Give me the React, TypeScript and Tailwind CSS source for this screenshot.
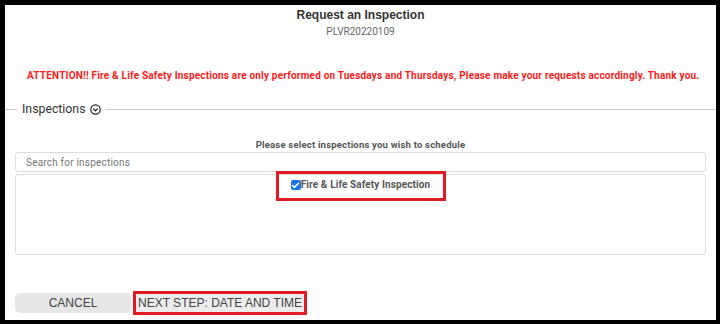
import { CheckIcon } from 'lucide-react'

function ChevronCircle() {
  return (
    <svg width="11" height="11" viewBox="0 0 12 12" className="mt-[1px]">
      <circle cx="6" cy="6" r="5.1" fill="none" stroke="#222" strokeWidth="1.3" />
      <path d="M3.6 5 L6 7.4 L8.4 5" fill="none" stroke="#222" strokeWidth="1.4" />
    </svg>
  )
}

export default function App() {
  return (
    <div
      className="h-[324px] w-[720px] bg-black pt-[5px] pl-[5px] pr-[4px] pb-[4px]"
      style={{ fontFamily: 'Roboto, "Liberation Sans", Arial, sans-serif' }}
    >
      <div className="flex h-full w-full flex-col bg-white">
        <div className="pt-[2px] text-center font-['Liberation_Sans',Arial,sans-serif] text-[12px] font-bold leading-[16px] text-[#333]">
          Request an Inspection
        </div>
        <div className="mt-[2px] text-center text-[10px] leading-[14px] text-[#666]">PLVR20220109</div>

        <div className="mt-[30px] pl-[22px] text-[10px] font-bold leading-[14px] tracking-[0.2px] text-[#ff1a1a]">
          ATTENTION!! Fire &amp; Life Safety Inspections are only performed on Tuesdays and Thursdays, Please make your requests accordingly. Thank you.
        </div>

        <div className="mt-[18px] flex items-center">
          <div className="h-px w-[12px] bg-[#ccc]" />
          <span className="pl-[5px] pr-[4px] text-[12.3px] leading-[16px] text-[#333]">Inspections</span>
          <ChevronCircle />
          <div className="ml-[4px] h-px flex-1 bg-[#ccc]" />
        </div>

        <div className="mt-[21px] text-center text-[9.5px] font-bold leading-[13px] tracking-[0.2px] text-[#555]">
          Please select inspections you wish to schedule
        </div>

        <div className="mt-[1px] px-[10px]">
          <div className="flex h-[20px] items-center rounded-[3px] border border-[#ddd] pl-[10px] text-[10px] tracking-[0.2px] text-[#777]">
            Search for inspections
          </div>
          <div className="mt-[2px] flex h-[81px] justify-center rounded-[3px] border border-[#ddd]">
            <div className="-mt-[4px] flex h-[30px] w-[170px] items-start justify-center border-[3px] border-[#e21b23] pt-[5px]">
              <span className="mt-[1px] flex h-[10px] w-[10px] items-center justify-center rounded-[2px] bg-[#1a73e8]">
                <CheckIcon size={9} color="white" strokeWidth={4} />
              </span>
              <span className="text-[10px] font-bold leading-[12px] tracking-[0.1px] text-[#555]">
                Fire &amp; Life Safety Inspection
              </span>
            </div>
          </div>
        </div>

        <div className="mt-[36px] flex items-center px-[10px] font-['Liberation_Sans',Arial,sans-serif]">
          <button className="h-[20px] w-[116px] rounded-[5px] bg-[#e6e6e6] text-[12px] leading-[20px] text-[#444]">
            CANCEL
          </button>
          <div className="ml-[2px] border-[3px] border-[#e21b23]">
            <div className="bg-[#ececec] px-[2px] text-[12px] leading-[18px] text-[#444]">NEXT STEP: DATE AND TIME</div>
          </div>
        </div>
      </div>
    </div>
  )
}
